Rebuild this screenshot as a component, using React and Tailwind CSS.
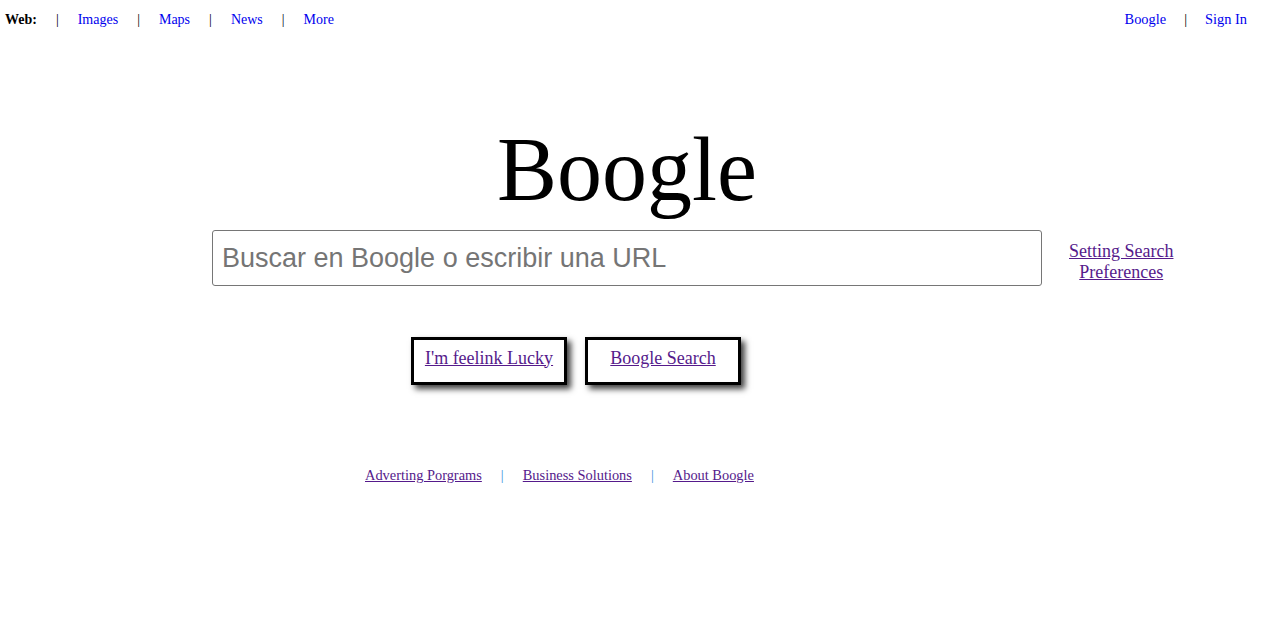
const serif = "font-['Liberation_Serif',_'Times_New_Roman',_serif]";

const topLinks = ['Images', 'Maps', 'News', 'More'];
const footLinks = ['Adverting Porgrams', 'Business Solutions', 'About Boogle'];

// thin pipe between nav items
const Sep = ({ className = 'text-black' }) => <span className={className}>|</span>;

export default function App() {
  return (
    <div className={`min-h-[627px] bg-white ${serif}`}>
      {/* Top nav */}
      <div className="flex h-[29px] items-start justify-between pt-[9px] pl-[5px] pr-[14px] leading-[20px]">
        <div className="mt-[1px] flex items-center gap-[19px] text-[14px]">
          <span className="font-bold text-black">Web:</span>
          {topLinks.map(l => (
            <div key={l} className="flex items-center gap-[19px]">
              <Sep />
              <a href="#" className="text-[#0000ee]">{l}</a>
            </div>
          ))}
        </div>
        <div className="flex items-center gap-[18px] text-[14.4px]">
          <a href="#" className="text-[#0000ee]">Boogle</a>
          <Sep />
          <a href="#" className="text-[#0000ee]">Sign In</a>
        </div>
      </div>

      {/* Logo */}
      <div className="ml-[212px] mt-[96px] w-[830px] text-center text-[90px] leading-[90px] text-black">
        Boogle
      </div>

      {/* Search row */}
      <div className="mt-[15px] flex items-start">
        <input
          type="text"
          placeholder="Buscar en Boogle o escribir una URL"
          className="ml-[212px] h-[56px] w-[830px] rounded-[3px] border border-[#767676] px-[9px] font-['Liberation_Sans',_Arial,_sans-serif] text-[27px] text-black placeholder:text-[#757575] outline-none"
        />
        <a href="#" className="ml-[27px] mt-[11px] text-center text-[18px] leading-[21px] text-[#551a8b] underline">
          Setting Search
          <br />
          Preferences
        </a>
      </div>

      {/* Buttons */}
      <div className="ml-[411px] mt-[51px] flex gap-[18px]">
        {["I'm feelink Lucky", 'Boogle Search'].map(b => (
          <button
            key={b}
            className="flex h-[48px] w-[156px] items-center justify-center border-[3px] border-black bg-white pb-[6px] text-[18px] text-[#551a8b] underline shadow-[4px_4px_6px_rgba(0,0,0,0.75)]"
          >
            {b}
          </button>
        ))}
      </div>

      {/* Footer */}
      <div className="ml-[365px] mt-[80px] flex items-center gap-[19px] text-[14.4px] leading-[20px]">
        {footLinks.map((l, i) => (
          <div key={l} className="flex items-center gap-[19px]">
            {i > 0 && <Sep className="text-[#3d8fdc]" />}
            <a href="#" className="text-[#551a8b] underline">{l}</a>
          </div>
        ))}
      </div>
    </div>
  );
}
